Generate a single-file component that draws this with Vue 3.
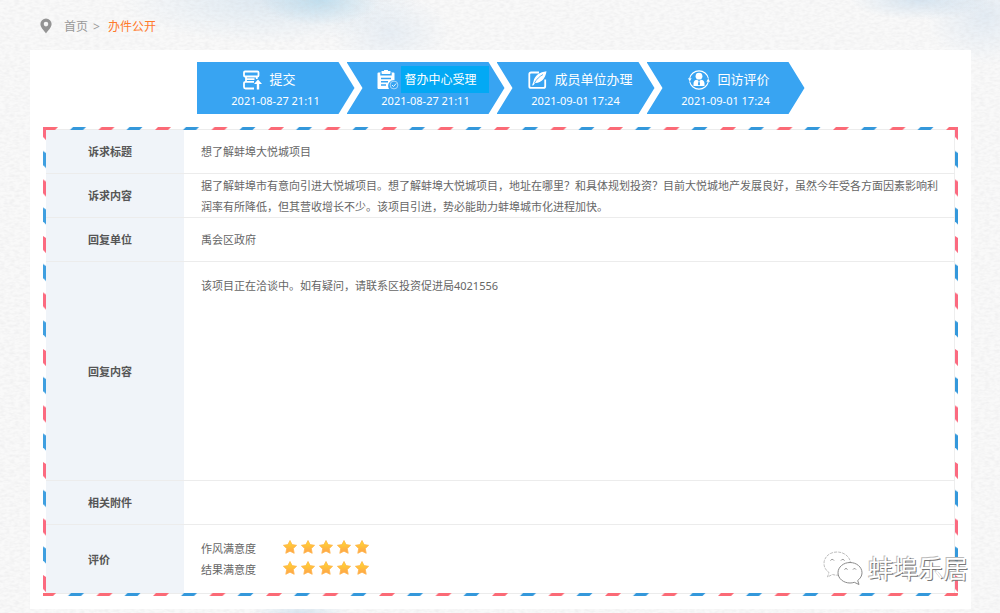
<script setup>
const steps = [
  { id: 'submit', title: '提交', time: '2021-08-27 21:11' },
  { id: 'center', title: '督办中心受理', time: '2021-08-27 21:11' },
  { id: 'member', title: '成员单位办理', time: '2021-09-01 17:24' },
  { id: 'visit', title: '回访评价', time: '2021-09-01 17:24' },
]

const rows = [
  { label: '诉求标题', text: '想了解蚌埠大悦城项目' },
  {
    label: '诉求内容',
    text: '据了解蚌埠市有意向引进大悦城项目。想了解蚌埠大悦城项目，地址在哪里？和具体规划投资？目前大悦城地产发展良好，虽然今年受各方面因素影响利润率有所降低，但其营收增长不少。该项目引进，势必能助力蚌埠城市化进程加快。',
  },
  { label: '回复单位', text: '禹会区政府' },
  { label: '回复内容', text: '该项目正在洽谈中。如有疑问，请联系区投资促进局4021556', kind: 'reply' },
  { label: '相关附件', text: '' },
]

const ratings = [
  { label: '作风满意度', score: 5 },
  { label: '结果满意度', score: 5 },
]
</script>

<template>
  <div class="page">
    <svg class="paper" aria-hidden="true">
      <filter id="grain" x="0" y="0" width="100%" height="100%">
        <feTurbulence type="fractalNoise" baseFrequency="0.2 0.4" numOctaves="2" seed="4" />
        <feColorMatrix type="matrix" values="0 0 0 0 0.6  0 0 0 0 0.6  0 0 0 0 0.62  0.4 0 0 0 -0.14" />
      </filter>
      <rect width="100%" height="100%" filter="url(#grain)" />
    </svg>

    <nav class="crumbs">
      <svg class="pin" viewBox="0 0 12 16" aria-hidden="true">
        <path fill-rule="evenodd" d="M6 0.5a5.6 5.6 0 0 0-5.6 5.6C0.4 9.8 4 12.500 6 15.500c2-3 5.600-5.700 5.600-9.400A5.600 5.600 0 0 0 6 0.500zM6 3.800a2.300 2.300 0 1 1 0 4.600 2.300 2.300 0 0 1 0-4.600z" />
      </svg>
      <a href="#" class="home">首页</a>
      <span class="sep">&gt;</span>
      <a href="#" class="current">办件公开</a>
    </nav>

    <main class="card">
      <ol class="steps">
        <li v-for="s in steps" :key="s.id" class="step" :class="s.id">
          <div class="step-head">
            <svg v-if="s.id === 'submit'" width="19" height="20" viewBox="0 0 19 20" fill="none" stroke="#fff" stroke-width="1.800" stroke-linejoin="round" aria-hidden="true">
              <rect x="1" y="1.500" width="14.500" height="5" rx="1" />
              <path d="M3 6.500v5.500M13.800 6.500v2.500M11 11.800H2.500a1.500 1.500 0 0 0-1.500 1.500v3.700a1.500 1.500 0 0 0 1.500 1.500h8.500M3 9.200h8.500" />
              <path stroke="none" fill="#fff" d="M15 9.500l4 4.500h-2.800v5.500h-2.400V14H11z" />
            </svg>
            <svg v-else-if="s.id === 'center'" width="22" height="20" viewBox="0 0 22 20" fill="none" aria-hidden="true">
              <path fill="#fff" d="M1.500 2.500h3V1h2.500a2 2 0 0 1 4 0h2.500v1.500h3a1 1 0 0 1 1 1V10a6 6 0 0 0-5.500 9H1.500a1 1 0 0 1-1-1V3.500a1 1 0 0 1 1-1z" />
              <path stroke="#38a4f2" stroke-width="1.400" d="M4 2.500v2.300h10V2.500M4 8.500h10M4 11.700h7M4 15h5" />
              <circle cx="17" cy="15" r="3.900" stroke="#b9dffb" stroke-width="0.900" />
              <path stroke="#fff" stroke-width="0.900" d="M15 15l1.500 1.500 2.700-3" />
            </svg>
            <svg v-else-if="s.id === 'member'" width="19" height="18" viewBox="0 0 19 18" fill="none" aria-hidden="true">
              <path stroke="#fff" stroke-width="1.800" d="M11 1.500H3A1.700 1.700 0 0 0 1.300 3.200v12A1.700 1.700 0 0 0 3 16.900h12.500a1.700 1.700 0 0 0 1.700-1.700V8.500" />
              <path fill="#fff" d="M18.500 0.300C12 1 6.500 4.500 5.500 10.500L4 14.500l1.500-0.300 1.500-2.200c6 0.500 10.500-4.500 11.500-11.700z" />
              <path stroke="#38a4f2" stroke-width="0.800" d="M6.500 12c2-4 5-6.500 8.500-8.500" />
            </svg>
            <svg v-else width="22" height="22" viewBox="0 0 22 22" fill="none" aria-hidden="true">
              <path stroke="#fff" stroke-width="1.100" d="M1.600 9.500A9.600 9.600 0 0 1 20.400 9.500M20.400 12.500A9.600 9.600 0 0 1 1.600 12.500" />
              <path fill="#fff" d="M0 9.200h3.600L1.800 12.600zM18.400 12.800H22l-1.800-3.400z" />
              <circle cx="11" cy="7.200" r="3.400" fill="#fff" />
              <path fill="#fff" d="M5.500 17v-2.500c0-2.300 1.500-3.500 3.500-3.700l2 1.500 2-1.500c2 0.200 3.500 1.400 3.500 3.700V17z" />
              <path fill="#38a4f2" d="M10.500 12.300h1l0.600 3.200-1.100 1-1.100-1z" />
            </svg>
            <span class="step-title">{{ s.title }}</span>
          </div>
          <time class="step-time">{{ s.time }}</time>
        </li>
      </ol>

      <section class="letter">
        <svg class="edge top" aria-hidden="true">
          <defs>
            <pattern id="dashTop" x="-1" width="56.500" height="3" patternUnits="userSpaceOnUse">
              <path fill="#fb6a76" d="M0 3L3 0H16L13 3z" />
              <path fill="#3498db" d="M28 3L31 0H44L41 3z" />
            </pattern>
          </defs>
          <rect width="100%" height="3" fill="url(#dashTop)" />
          <path fill="#fb6a76" d="M0 0h6v3H0z" />
        </svg>
        <svg class="edge bottom" aria-hidden="true">
          <defs>
            <pattern id="dashBottom" x="-3" width="56.500" height="3" patternUnits="userSpaceOnUse">
              <path fill="#fb6a76" d="M0 3L3 0H16L13 3z" />
              <path fill="#3498db" d="M28 3L31 0H44L41 3z" />
            </pattern>
          </defs>
          <rect width="100%" height="3" fill="url(#dashBottom)" />
        </svg>
        <svg class="edge left" aria-hidden="true">
          <defs>
            <pattern id="dashLeft" y="-4" width="3" height="56.500" patternUnits="userSpaceOnUse">
              <path fill="#fb6a80" d="M0 0L3 2V17L0 14z" />
              <path fill="#3f9fe0" d="M0 28L3 30V45L0 42z" />
            </pattern>
          </defs>
          <rect width="3" height="100%" fill="url(#dashLeft)" />
        </svg>
        <svg class="edge right" aria-hidden="true">
          <defs>
            <pattern id="dashRight" y="-4" width="3" height="56.500" patternUnits="userSpaceOnUse">
              <path fill="#fb6a80" d="M0 0L3 2V17L0 14z" />
              <path fill="#3498db" d="M0 28L3 30V45L0 42z" />
            </pattern>
          </defs>
          <rect width="3" height="100%" fill="url(#dashRight)" />
        </svg>

        <table class="detail">
          <tbody>
            <tr v-for="r in rows" :key="r.label" :class="r.kind">
              <th scope="row">{{ r.label }}</th>
              <td>{{ r.text }}</td>
            </tr>
            <tr class="rating-row">
              <th scope="row">评价</th>
              <td>
                <div v-for="r in ratings" :key="r.label" class="rating">
                  <span class="rating-label">{{ r.label }}</span>
                  <span class="stars">
                    <svg v-for="n in r.score" :key="n" class="star" viewBox="0 0 14 14" aria-hidden="true">
                      <defs>
                        <linearGradient id="gold" x1="0" y1="0" x2="0" y2="1">
                          <stop offset="0" stop-color="#ffdc2e" />
                          <stop offset="1" stop-color="#ffa04c" />
                        </linearGradient>
                      </defs>
                      <path fill="url(#gold)" stroke="#ffb54a" stroke-width="0.800" stroke-linejoin="round" d="M7 0.500l2.100 4.100 4.500 0.700-3.300 3.200 0.900 4.800L7 11.200 2.800 13.300l0.900-4.800L0.400 5.300l4.500-0.700z" />
                    </svg>
                  </span>
                </div>
              </td>
            </tr>
          </tbody>
        </table>
      </section>
    </main>

    <div class="watermark">
      <svg width="40" height="34" viewBox="0 0 40 34" fill="none" aria-hidden="true">
        <path fill="#fff" stroke="#b5b5b5" stroke-width="0.900" stroke-dasharray="3 1" d="M14 1C6.500 1 1 6 1 12.500c0 4 2 7 5 9L4.500 26l5-2.500c1.500 0.500 3 0.700 4.500 0.700 8 0 13.500-5 13.500-11.500S21.500 1 14 1z" />
        <path fill="#fff" stroke="#8b8b8b" stroke-width="1" d="M27 11.500c-6.500 0-12 4.500-12 10.300S20.500 32 27 32c1.500 0 3-0.200 4.300-0.700l4.700 2.200-1.300-4c2.600-2 4.300-4.600 4.300-7.700 0-5.800-5.500-10.300-12-10.300z" />
        <path stroke="#8b8b8b" d="M7.500 9.500a2 2 0 0 1 3.500 0M18 9.500a2 2 0 0 1 3.500 0M21.500 18.500a1.700 1.700 0 0 1 3 0M30 18.500a1.700 1.700 0 0 1 3 0" />
      </svg>
      <span class="watermark-name">蚌埠乐居</span>
    </div>
  </div>
</template>

<style>
body {
  margin: 0;
  background: #f6f7f8;
}
</style>

<style scoped>
.page {
  position: relative;
  box-sizing: border-box;
  min-height: 100vh;
  padding: 0 29px 4px 30px;
  overflow: hidden;
  font-family: "Noto Sans", "Noto Sans CJK SC", sans-serif;
  font-size: 11px;
  line-height: 21px;
  color: #666;
  background:
    radial-gradient(ellipse 60px 26px at 320px 0, rgba(160, 208, 232, 0.55), transparent),
    radial-gradient(ellipse 150px 44px at 270px 0, rgba(195, 218, 236, 0.5), transparent),
    radial-gradient(ellipse 60px 40px at 390px 32px, rgba(205, 222, 238, 0.4), transparent),
    radial-gradient(ellipse 70px 20px at 920px 0, rgba(185, 212, 234, 0.55), transparent),
    radial-gradient(ellipse 60px 50px at 985px 15px, rgba(205, 222, 238, 0.5), transparent),
    radial-gradient(ellipse 50px 12px at 300px 100%, rgba(195, 218, 236, 0.6), transparent),
    #f9f9f9;
}

.paper {
  position: absolute;
  inset: 0;
  width: 100%;
  height: 100%;
}

.crumbs {
  position: relative;
  display: flex;
  align-items: center;
  height: 50px;
  padding: 2px 0 0 10px;
  box-sizing: border-box;
  font-size: 12px;
  color: #999;
}

.pin {
  width: 12px;
  height: 16px;
  margin-right: 12px;
  fill: #949494;
}

.crumbs a {
  color: inherit;
  text-decoration: none;
}

.crumbs .current {
  color: #ff7a2c;
}

.sep {
  margin: 0 8px 0 5px;
}

.card {
  position: relative;
  padding: 12px 13px 13px;
  background: #fff;
}

.steps {
  display: flex;
  justify-content: center;
  margin: 0 0 13px;
  padding: 0;
  list-style: none;
  color: #fff;
}

.step {
  box-sizing: border-box;
  width: 158px;
  height: 52px;
  padding-top: 4px;
  background: #38a4f2;
  clip-path: polygon(0 0, 142px 0, 100% 50%, 142px 100%, 0 100%, 16px 50%);
}

.step:first-child {
  clip-path: polygon(0 0, 142px 0, 100% 50%, 142px 100%, 0 100%);
}

.step + .step {
  margin-left: -8px;
}

.step-head {
  display: flex;
  align-items: center;
  gap: 8px;
  height: 27px;
  font-size: 13px;
}

.submit .step-head {
  padding-left: 46px;
}

.center .step-head {
  gap: 2px;
  padding-left: 30px;
  font-size: 12px;
}

.center .step-title {
  padding: 3px 12px 3px 4px;
  background: #03a9f4;
}

.member .step-head {
  padding-left: 31px;
}

.visit .step-head {
  padding-left: 41px;
}

.step-time {
  display: block;
  line-height: 16px;
  text-align: center;
}

.letter {
  position: relative;
  padding: 2px 3px;
}

.edge {
  position: absolute;
}

.top,
.bottom {
  left: 0;
  width: 100%;
  height: 3px;
}

.left,
.right {
  top: 0;
  width: 3px;
  height: 100%;
}

.top {
  top: 0;
}

.bottom {
  bottom: 0;
}

.left {
  left: 0;
}

.right {
  right: 0;
}

.detail {
  width: 100%;
  border-collapse: collapse;
  border-right: 1px solid #eee;
}

.detail th,
.detail td {
  box-sizing: border-box;
  height: 44px;
  padding: 0 8px 0 17px;
  border-top: 1px solid #ececec;
  text-align: left;
}

.detail th {
  width: 138px;
  padding: 0 0 0 42px;
  background: #f0f4f9;
  color: #555;
}

.detail .reply th,
.detail .reply td {
  height: 219px;
}

.detail .reply td {
  padding-top: 13px;
  vertical-align: top;
}

.detail .rating-row th,
.detail .rating-row td {
  height: 69px;
  border-bottom: 1px solid #ececec;
}

.rating {
  display: flex;
}

.rating-label {
  width: 82px;
}

.stars {
  display: flex;
  gap: 4px;
  padding-top: 2px;
}

.star {
  width: 14px;
  height: 14px;
}

.watermark {
  position: absolute;
  right: 32px;
  bottom: 28px;
  display: flex;
  align-items: center;
  gap: 5px;
}

.watermark-name {
  font-size: 25px;
  line-height: 34px;
  color: #fff;
  text-shadow: 1px 1px 0 #777, -1px -1px 0 #bbb;
}
</style>
